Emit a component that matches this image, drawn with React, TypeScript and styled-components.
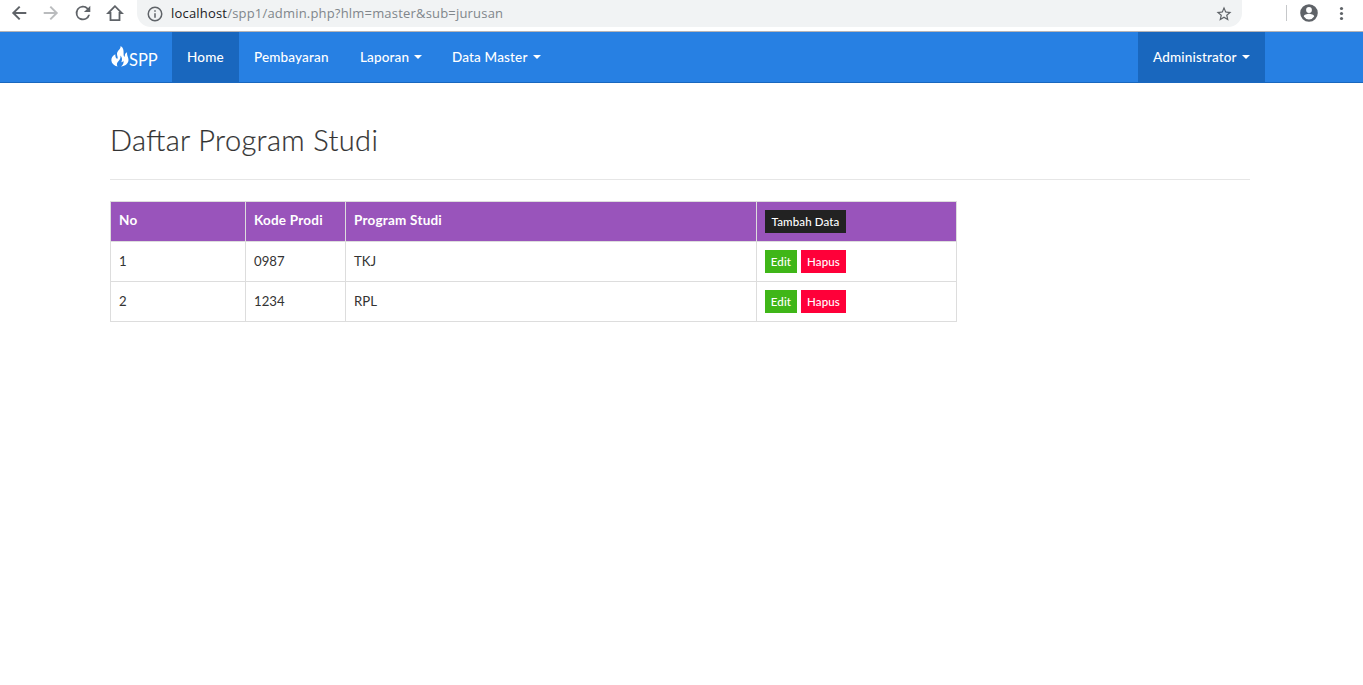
import React from "react";
import styled, { createGlobalStyle } from "styled-components";

const GlobalStyle = createGlobalStyle`
  * { box-sizing: border-box; }
  body {
    margin: 0;
    background: #fff;
    color: #333;
    font: 13.5px/21px Lato, "Open Sans", sans-serif;
    overflow: hidden;
  }
  a { color: inherit; text-decoration: none; }
`;

const Toolbar = styled.header`
  display: flex;
  align-items: flex-start;
  height: 32px;
  padding-left: 7px;
  border-bottom: 1px solid #b6b4b6;
`;

const ToolButton = styled.span<{ $dim?: boolean }>`
  display: flex;
  justify-content: center;
  width: 32px;
  padding-top: 1px;
  margin-left: -4px;
  margin-right: 4px;
  color: ${(p) => (p.$dim ? "#babcbe" : "#5f6368")};
`;

const Icon = styled.svg<{ $size?: number }>`
  display: block;
  flex: none;
  width: ${(p) => p.$size ?? 24}px;
  height: ${(p) => p.$size ?? 24}px;
  fill: currentColor;
`;

const AddressBar = styled.div`
  display: flex;
  align-items: center;
  width: 1105px;
  height: 27px;
  margin-left: 2px;
  padding: 0 9px;
  border-radius: 0 0 14px 14px;
  background: #f1f3f4;
  color: #5f6368;
`;

const Url = styled.span`
  flex: 1;
  padding: 0 0 2px 7px;
  font: 13px/20px "Open Sans", sans-serif;
  letter-spacing: 0.19px;
  color: #80868b;
  b { font-weight: 400; color: #202124; }
`;

const Divider = styled.span`
  width: 1px;
  height: 16px;
  margin: 5px 10px 0 44px;
  background: #c6c8ca;
`;

const ProfileTools = styled.div`
  display: flex;
  gap: 10px;
  padding-top: 1px;
  color: #5f6368;
`;

const Navbar = styled.nav`
  height: 51px;
  background: #2780e3;
  border-bottom: 1px solid #1967be;
  color: #fff;
`;

const NavInner = styled.div`
  display: flex;
  width: 1168px;
  height: 50px;
  margin-left: 97px;
`;

const Brand = styled.a`
  display: flex;
  width: 75px;
  padding: 14px 0 0 14px;
  font-size: 16.500px;
  line-height: 28px;
`;

const NavItem = styled.a<{ $width: number; $active?: boolean; $end?: boolean }>`
  display: flex;
  align-items: center;
  width: ${(p) => p.$width}px;
  height: 50px;
  padding-left: 15px;
  margin-left: ${(p) => (p.$end ? "auto" : 0)};
  background: ${(p) => (p.$active ? "#1967be" : "transparent")};
  font-weight: 500;
  letter-spacing: 0.16px;
  white-space: nowrap;
`;

const Caret = styled.i`
  margin-left: auto;
  margin-right: 15px;
  border: 4px solid transparent;
  border-top-color: #fff;
  border-bottom: 0;
`;

const Content = styled.main`
  width: 1140px;
  margin-left: 110px;
  padding-top: 38px;
`;

const Title = styled.h2`
  margin: 0;
  height: 59px;
  border-bottom: 1px solid #e6e6e6;
  font-size: 29px;
  font-weight: 300;
  line-height: 38px;
  letter-spacing: 0.37px;
  font-feature-settings: "liga" 1;
  -webkit-text-stroke: 0.2px currentColor;
`;

const Table = styled.table`
  width: 847px;
  margin-top: 21px;
  table-layout: fixed;
  border-collapse: collapse;
  th, td {
    height: 40px;
    padding: 8px;
    border: 1px solid #ddd;
    text-align: left;
    vertical-align: top;
    line-height: 21px;
  }
  td { line-height: 22px; font-size: 13.2px; }
  th {
    background: #9954bb;
    color: #fff;
    font-weight: 700;
    letter-spacing: 0.22px;
  }
`;

const Actions = styled.div`
  display: flex;
  gap: 4px;
`;

const Button = styled.a<{ $bg: string; $width: number }>`
  display: block;
  width: ${(p) => p.$width}px;
  height: 23px;
  background: ${(p) => p.$bg};
  color: #fff;
  font-size: 11.5px;
  font-weight: 500;
  line-height: 24px;
  letter-spacing: 0.13px;
  text-align: center;
  white-space: nowrap;
`;

const programs = [
  { no: 1, code: "0987", name: "TKJ" },
  { no: 2, code: "1234", name: "RPL" },
];

const Flame = () => (
  <svg width="18" height="21" viewBox="0 0 18 21" fill="#fff">
    <path d="M9.600 0C10 3 6.400 4.500 6 7.500C5.800 9.500 7.200 11 6.500 12.800C5 12.800 4.200 11 4.300 8.300C1.500 9.800 .1 12 .4 14.800C.7 17.500 3 19.800 6.600 20.600C5.400 18.500 5.800 16.800 7.400 15.200C9 13.500 9.800 12 9.400 9.500C11.300 11.500 11.400 14 10.300 16.300C11.500 16.100 12 15.400 12.300 14.500C13.100 16.700 12.100 18.900 10 20.600C14.300 20 17.300 17.700 17.500 14.300C17.700 11.200 15.600 9.800 16.100 6.300C14.200 7.200 13.500 8.600 13.900 10.600C12.900 10.800 12.500 9.500 12.600 7.500C12.700 4 12.300 1.500 9.600 0Z" />
  </svg>
);

export default function App() {
  return (
    <>
      <GlobalStyle />
      <Toolbar>
        <ToolButton>
          <Icon viewBox="0 0 24 24"><path d="M19.300 11H8.700l4.700-4.700L12 4.900 4.900 12l7.100 7.100 1.400-1.400L8.700 13h10.600z" /></Icon>
        </ToolButton>
        <ToolButton $dim>
          <Icon viewBox="0 0 24 24"><path d="M4.700 11h10.600l-4.700-4.700L12 4.900l7.100 7.100-7.100 7.100-1.400-1.400 4.700-4.700H4.700z" /></Icon>
        </ToolButton>
        <ToolButton>
          <Icon viewBox="0 0 24 24"><path d="M17.650 6.350A8 8 0 1 0 19.730 14h-2.080A6 6 0 1 1 12 6c1.660 0 3.140.69 4.220 1.780L13 11h7V4z" transform="translate(1.100 1.100) scale(.91)" /></Icon>
        </ToolButton>
        <ToolButton>
          <Icon viewBox="0 0 24 24" style={{ fill: "none" }}><path d="M12 5.200 5.200 12h2.300v7.200h9V12h2.300z" stroke="currentColor" strokeWidth="1.800" /></Icon>
        </ToolButton>
        <AddressBar>
          <Icon $size={18} viewBox="0 0 24 24"><path d="M11 17h2v-6h-2zm1-15a10 10 0 1 0 0 20 10 10 0 0 0 0-20m0 18a8 8 0 1 1 0-16 8 8 0 0 1 0 16M11 9h2V7h-2z" /></Icon>
          <Url><b>localhost</b>/spp1/admin.php?hlm=master&amp;sub=jurusan</Url>
          <Icon $size={18} viewBox="0 0 24 24"><path d="m22 9.240-7.190-.62L12 2 9.190 8.630 2 9.240l5.460 4.730L5.820 21 12 17.270 18.180 21l-1.630-7.030zM12 15.400l-3.760 2.270 1-4.280-3.320-2.880 4.380-.38L12 6.100l1.710 4.040 4.380.38-3.320 2.880 1 4.280z" /></Icon>
        </AddressBar>
        <Divider />
        <ProfileTools>
          <Icon viewBox="0 0 24 24"><path d="M12 3.200a8.800 8.800 0 1 0 0 17.600 8.800 8.800 0 0 0 0-17.600m0 2.900a2.900 2.900 0 1 1 0 5.800 2.900 2.900 0 0 1 0-5.800m0 12.300a6.200 6.200 0 0 1-5.200-2.900c0-1.700 3.500-2.700 5.200-2.700s5.200 1 5.200 2.700a6.200 6.200 0 0 1-5.200 2.900" /></Icon>
          <Icon viewBox="0 0 24 24"><circle cx="10.500" cy="7.500" r="1.600" /><circle cx="10.500" cy="12.500" r="1.600" /><circle cx="10.500" cy="17.500" r="1.600" /></Icon>
        </ProfileTools>
      </Toolbar>
      <Navbar>
        <NavInner>
          <Brand href="#"><Flame />SPP</Brand>
          <NavItem href="#" $width={67} $active>Home</NavItem>
          <NavItem href="#" $width={106}>Pembayaran</NavItem>
          <NavItem href="#" $width={92}>Laporan<Caret /></NavItem>
          <NavItem href="#" $width={119}>Data Master<Caret /></NavItem>
          <NavItem href="#" $width={127} $active $end>Administrator<Caret /></NavItem>
        </NavInner>
      </Navbar>
      <Content>
        <Title>Daftar Program Studi</Title>
        <Table>
          <colgroup>
            <col style={{ width: 135 }} />
            <col style={{ width: 100 }} />
            <col style={{ width: 411 }} />
            <col style={{ width: 200 }} />
          </colgroup>
          <thead>
            <tr>
              <th>No</th>
              <th>Kode Prodi</th>
              <th>Program Studi</th>
              <th><Button href="#" $bg="#222" $width={81}>Tambah Data</Button></th>
            </tr>
          </thead>
          <tbody>
            {programs.map((p) => (
              <tr key={p.no}>
                <td>{p.no}</td>
                <td>{p.code}</td>
                <td>{p.name}</td>
                <td>
                  <Actions>
                    <Button href="#" $bg="#3fb618" $width={32}>Edit</Button>
                    <Button href="#" $bg="#ff0039" $width={45}>Hapus</Button>
                  </Actions>
                </td>
              </tr>
            ))}
          </tbody>
        </Table>
      </Content>
    </>
  );
}
